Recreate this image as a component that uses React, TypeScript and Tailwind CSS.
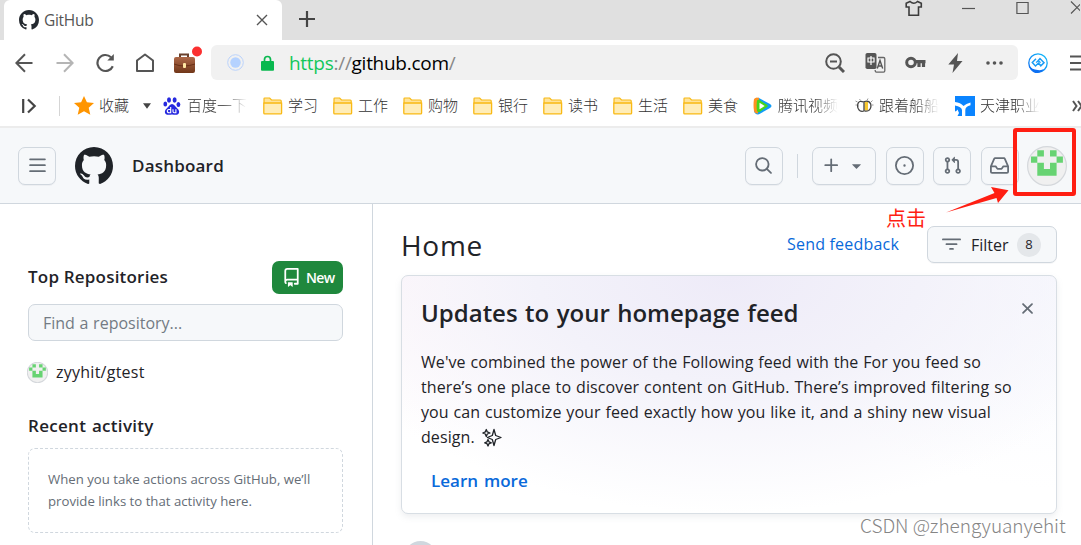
import type { ReactNode } from "react";

const PATHS = {
  mark: "M8 0c4.42 0 8 3.58 8 8a8.013 8.013 0 0 1-5.45 7.59c-.4.08-.55-.17-.55-.38 0-.27.01-1.13.01-2.2 0-.75-.25-1.23-.54-1.48 1.78-.2 3.65-.88 3.65-3.95 0-.88-.31-1.59-.82-2.15.08-.2.36-1.02-.08-2.12 0 0-.67-.22-2.2.82-.64-.18-1.32-.27-2-.27-.68 0-1.36.09-2 .27-1.53-1.03-2.2-.82-2.2-.82-.44 1.1-.16 1.92-.08 2.12-.51.56-.82 1.28-.82 2.15 0 3.06 1.86 3.75 3.64 3.95-.23.2-.44.55-.51 1.07-.46.21-1.61.55-2.33-.66-.15-.24-.6-.83-1.23-.82-.67.01-.27.38.01.53.34.19.73.9.82 1.13.16.45.68 1.31 2.69.94 0 .67.01 1.3.01 1.49 0 .21-.15.45-.55.38A7.995 7.995 0 0 1 0 8c0-4.42 3.58-8 8-8Z",
  bars: "M1 2.75A.75.75 0 0 1 1.75 2h12.5a.75.75 0 0 1 0 1.5H1.75A.75.75 0 0 1 1 2.75Zm0 5A.75.75 0 0 1 1.75 7h12.5a.75.75 0 0 1 0 1.5H1.75A.75.75 0 0 1 1 7.75ZM1.75 12h12.5a.75.75 0 0 1 0 1.5H1.75a.75.75 0 0 1 0-1.5Z",
  search: "M10.68 11.74a6 6 0 0 1-7.922-8.982 6 6 0 0 1 8.982 7.922l3.04 3.04a.749.749 0 0 1-.326 1.275.749.749 0 0 1-.734-.215ZM11.5 7a4.499 4.499 0 1 0-8.997 0A4.499 4.499 0 0 0 11.5 7Z",
  plus: "M7.75 2a.75.75 0 0 1 .75.75V7h4.25a.75.75 0 0 1 0 1.5H8.5v4.25a.75.75 0 0 1-1.5 0V8.5H2.75a.75.75 0 0 1 0-1.5H7V2.75A.75.75 0 0 1 7.75 2Z",
  caret: "m4.427 7.427 3.396 3.396a.25.25 0 0 0 .354 0l3.396-3.396A.25.25 0 0 0 11.396 7H4.604a.25.25 0 0 0-.177.427Z",
  issue: "M8 9a1 1 0 1 0 0-2 1 1 0 0 0 0 2ZM8 0a8 8 0 1 1 0 16A8 8 0 0 1 8 0ZM1.5 8a6.5 6.5 0 1 0 13 0 6.5 6.5 0 0 0-13 0Z",
  pull: "M1.5 3.25a2.25 2.25 0 1 1 3 2.122v5.256a2.251 2.251 0 1 1-1.5 0V5.372A2.25 2.25 0 0 1 1.5 3.25Zm5.677-.177L9.573.677A.25.25 0 0 1 10 .854V2.5h1A2.5 2.5 0 0 1 13.5 5v5.628a2.251 2.251 0 1 1-1.5 0V5a1 1 0 0 0-1-1h-1v1.646a.25.25 0 0 1-.427.177L7.177 3.427a.25.25 0 0 1 0-.354ZM3.75 2.5a.75.75 0 1 0 0 1.5.75.75 0 0 0 0-1.5Zm0 9.5a.75.75 0 1 0 0 1.5.75.75 0 0 0 0-1.5Zm8.25.75a.75.75 0 1 0 1.5 0 .75.75 0 0 0-1.5 0Z",
  inbox: "M2.8 2.06A1.75 1.75 0 0 1 4.41 1h7.18c.7 0 1.333.417 1.61 1.06l2.74 6.395c.04.093.06.194.06.295v4.5A1.75 1.75 0 0 1 14.25 15H1.75A1.75 1.75 0 0 1 0 13.25v-4.5c0-.101.02-.202.06-.295Zm1.61.44a.25.25 0 0 0-.23.152L1.887 8H4.75a.75.75 0 0 1 .6.3L6.625 10h2.75l1.275-1.7a.75.75 0 0 1 .6-.3h2.863L11.82 2.652a.25.25 0 0 0-.23-.152Zm10.09 7h-2.875l-1.275 1.7a.75.75 0 0 1-.6.3h-3.5a.75.75 0 0 1-.6-.3L4.375 9.5H1.5v3.75c0 .138.112.25.25.25h12.5a.25.25 0 0 0 .25-.25Z",
  repo: "M2 2.5A2.5 2.5 0 0 1 4.5 0h8.75a.75.75 0 0 1 .75.75v12.5a.75.75 0 0 1-.75.75h-2.5a.75.75 0 0 1 0-1.5h1.75v-2h-8a1 1 0 0 0-.714 1.7.75.75 0 1 1-1.072 1.05A2.495 2.495 0 0 1 2 11.5Zm10.5-1h-8a1 1 0 0 0-1 1v6.708A2.486 2.486 0 0 1 4.5 9h8ZM5 12.25a.25.25 0 0 1 .25-.25h3.5a.25.25 0 0 1 .25.25v3.25a.25.25 0 0 1-.4.2l-1.45-1.087a.249.249 0 0 0-.3 0L5.4 15.7a.25.25 0 0 1-.4-.2Z",
  x: "M3.72 3.72a.75.75 0 0 1 1.06 0L8 6.94l3.22-3.22a.749.749 0 0 1 1.275.326.749.749 0 0 1-.215.734L9.06 8l3.22 3.22a.749.749 0 0 1-.326 1.275.749.749 0 0 1-.734-.215L8 9.06l-3.22 3.22a.751.751 0 0 1-1.042-.018.751.751 0 0 1-.018-1.042L6.94 8 3.72 4.78a.75.75 0 0 1 0-1.06Z",
  filter: "M.75 3h14.5a.75.75 0 0 1 0 1.5H.75a.75.75 0 0 1 0-1.5ZM3 7.75A.75.75 0 0 1 3.75 7h8.5a.75.75 0 0 1 0 1.5h-8.5A.75.75 0 0 1 3 7.75Zm3 4a.75.75 0 0 1 .75-.75h2.5a.75.75 0 0 1 0 1.5h-2.5a.75.75 0 0 1-.75-.75Z",
};

function Octicon({ name, size = 19, className = "" }: { name: keyof typeof PATHS; size?: number; className?: string }) {
  return (
    <svg viewBox="0 0 16 16" width={size} height={size} fill="currentColor" className={`shrink-0 ${className}`}>
      <path d={PATHS[name]} />
    </svg>
  );
}

function Identicon({ size }: { size: number }) {
  return (
    <svg viewBox="0 0 40 40" width={size} height={size} className="shrink-0">
      <circle cx="20" cy="20" r="19.400" fill="#f0f0f0" stroke="#d5d8dc" strokeWidth={size > 30 ? 1.2 : 2} />
      <path
        fill="#67d372"
        d="M10.3 4.2h6.6v6.2h-6.6zM23 4.2h6.6v6.2H23zM4 10.4h6.3v6.3H4zM29.6 10.4h6.3v6.3h-6.3zM10.3 16.7h6.6V23H23v-6.3h6.6v13H10.3z"
      />
    </svg>
  );
}

function Folder() {
  return (
    <svg width="20" height="18" viewBox="0 0 20 18" className="shrink-0">
      <path d="M1 1.7Q1 1 1.7 1h5l1.8 2H17.300q.9 0 .9.9V6H1z" fill="#ffe39a" stroke="#f7b916" strokeWidth="1.2" />
      <path d="M.8 6.200h17.800V16q0 .9-.9.9H1.700q-.9 0-.9-.9z" fill="#ffedb8" stroke="#f9b914" strokeWidth="1.3" />
    </svg>
  );
}

function HeaderButton({ children, className = "w-[38px]" }: { children: ReactNode; className?: string }) {
  return (
    <button
      className={`flex h-[38px] shrink-0 items-center justify-center rounded-[7px] border border-[#d0d7de] bg-[#f6f8fa] text-[#656d76] shadow-[0_1px_0_rgba(31,35,40,0.04)] ${className}`}
    >
      {children}
    </button>
  );
}

function TabStrip() {
  return (
    <div className="flex h-10 bg-[#e0e0e0] pl-1">
      <div className="flex w-[278px] items-center rounded-t-md bg-white pl-[15px] pr-[14px]">
        <Octicon name="mark" size={20} className="text-[#24292f]" />
        <span className="ml-[5px] w-[60px] pt-0.5 text-[15.500px] tracking-[-0.3px] text-[#555]">GitHub</span>
        <svg width="12" height="12" viewBox="0 0 12 12" className="ml-auto" stroke="#555" strokeWidth="1.4">
          <path d="M1 1l10 10M11 1L1 11" />
        </svg>
      </div>
      <svg width="16" height="16" viewBox="0 0 16 16" className="ml-[17px] mt-[11px]" stroke="#444" strokeWidth="2.2">
        <path d="M8 0v16M0 8h16" />
      </svg>
      <svg width="18" height="17" viewBox="0 0 18 17" className="ml-[590px]" fill="none" stroke="#3c3c3c" strokeWidth="1.6">
        <path d="M5 1.500L1.200 3.200V7H4v8.200h9.500V7h2.800V3.200L12.500 1.500Q8.700 5 5 1.500z" />
      </svg>
      <svg width="13" height="17" viewBox="0 0 13 17" className="ml-[39px]" stroke="#555" strokeWidth="1.2">
        <path d="M0 8.500h13" />
      </svg>
      <svg width="13" height="17" viewBox="0 0 13 17" className="ml-[41px]" fill="none" stroke="#555" strokeWidth="1.2">
        <path d="M.9 2.500h11.200v11H.9z" />
      </svg>
      <svg width="10" height="17" viewBox="0 0 10 17" className="ml-[41px]" stroke="#555" strokeWidth="1.2">
        <path d="M1 1.500l12 12M1 13.500l12-12" />
      </svg>
    </div>
  );
}

function AddressBar() {
  return (
    <div className="flex h-[45px] items-center overflow-hidden bg-white pl-[15px] [&>svg]:shrink-0">
      <svg width="18" height="20" viewBox="0 0 18 20" fill="none" stroke="#555" strokeWidth="2">
        <path d="M17.500 10H1.500M10 1.300L1.400 10l8.600 8.700" />
      </svg>
      <svg width="18" height="20" viewBox="0 0 18 20" className="ml-[23px]" fill="none" stroke="#b5b5b5" strokeWidth="2">
        <path d="M.5 10h16M8 1.300l8.600 8.700L8 18.700" />
      </svg>
      <svg width="20" height="20" viewBox="0 0 20 20" className="ml-[22px]" fill="none" stroke="#555" strokeWidth="2.200">
        <path d="M16.800 13.200A8 8 0 1 1 15 4.200" />
        <path d="M17.800 1v6.500h-6.500z" fill="#555" stroke="none" />
      </svg>
      <svg width="20" height="20" viewBox="0 0 20 20" className="ml-[19px]" fill="none" stroke="#555" strokeWidth="2" strokeLinejoin="round">
        <path d="M2 7.500L10 1.500l8 6V18H2z" />
      </svg>
      <svg width="30" height="29" viewBox="0 0 30 29" className="mb-[5px] ml-[17px]">
        <defs>
          <linearGradient id="bag" x1="0" y1="0" x2="0" y2="1">
            <stop offset="0" stopColor="#ae6848" />
            <stop offset="1" stopColor="#713719" />
          </linearGradient>
        </defs>
        <path d="M8 13v-4.500h8V13" fill="none" stroke="#69402c" strokeWidth="2" />
        <rect x="2" y="11" width="21" height="16" rx="2" fill="url(#bag)" />
        <path d="M2 18q10 4 21 0" stroke="#693016" fill="none" />
        <rect x="11" y="17" width="3" height="5" rx="1" fill="#ffe6a2" />
        <circle cx="25" cy="5.500" r="5" fill="#fb3030" />
      </svg>
      <div className="ml-[9px] flex h-[35px] w-[807px] shrink-0 items-center rounded-md bg-[#f1f1f1] pl-4">
        <svg width="17" height="17" viewBox="0 0 17 17">
          <circle cx="8.500" cy="8.500" r="7.800" fill="none" stroke="#bad2fb" />
          <circle cx="8.500" cy="8.500" r="5.200" fill="#b5d2ff" />
        </svg>
        <svg width="13" height="16" viewBox="0 0 13 16" className="ml-[17px]">
          <path d="M3.500 7V4.500a3 3 0 0 1 6 0V7" fill="none" stroke="#09b84f" strokeWidth="1.700" />
          <rect y="6" width="13" height="9.700" rx="1" fill="#09b84f" />
        </svg>
        <span className="ml-[15px] w-[200px] whitespace-nowrap text-[19px] leading-[30px] tracking-[-0.28px] text-black">
          <span className="text-[#13c75a]">https</span>
          <span className="text-[#888]">://</span>github.com<span className="text-[#888]">/</span>
        </span>
        <svg width="20" height="20" viewBox="0 0 20 20" className="ml-[336px]" fill="none" stroke="#555" strokeWidth="2">
          <circle cx="8.500" cy="8.500" r="7.300" />
          <path d="M5 8.500h7" />
          <path d="M14 14l5 5" strokeWidth="3" />
        </svg>
        <svg width="21" height="20" viewBox="0 0 21 20" className="ml-5">
          <rect x=".5" width="11" height="16" rx="1.800" fill="#555" />
          <path d="M3 5h6v4H3zM6 3v9" fill="none" stroke="#fff" strokeWidth="1.200" />
          <path d="M13 4.500h5.500q1.300 0 1.300 1.300v12q0 1.300-1.300 1.300h-7q-1.300 0-1.300-1.300V17" fill="none" stroke="#666" strokeWidth="1.300" />
          <path d="M12.300 15.500l2.700-8 2.700 8M13.200 13h3.700" fill="none" stroke="#555" strokeWidth="1.400" />
        </svg>
        <svg width="21" height="13" viewBox="0 0 21 13" className="ml-[19px]" fill="none" stroke="#555">
          <circle cx="6" cy="6.500" r="4.300" strokeWidth="3" />
          <path d="M10 5.700h10.500M14 6v5M18.500 6v5" strokeWidth="3.200" />
        </svg>
        <svg width="15" height="20" viewBox="0 0 15 20" className="ml-[22px]">
          <path d="M10 0L.3 11.500H6L4.500 20 14.500 8H9z" fill="#555" />
        </svg>
        <svg width="17" height="4" viewBox="0 0 17 4" className="ml-[23px]" fill="#555">
          <circle cx="2" cy="2" r="1.800" />
          <circle cx="8.500" cy="2" r="1.800" />
          <circle cx="15" cy="2" r="1.800" />
        </svg>
      </div>
      <svg width="20" height="20" viewBox="0 0 20 20" className="ml-[10px]" fill="none">
        <defs>
          <linearGradient id="ring" x1="1" y1="0" x2="0" y2="1">
            <stop offset="0" stopColor="#16c1fb" />
            <stop offset="1" stopColor="#0b69ef" />
          </linearGradient>
        </defs>
        <circle cx="10" cy="10" r="9.200" stroke="url(#ring)" strokeWidth="1.300" />
        <path d="M.8 12.500q3 4 9 4.500 4 .5 6-1-2 4.500-8.500 4Q2.500 18.500.8 12.500z" fill="#0e70f2" />
        <path d="M8 5.800L4.300 9.500 7.500 13l3-3 2.300 2.800L16 9.700 12 5.500 9.800 8" stroke="#1b9cf5" strokeWidth="1.500" />
        <path d="M8 9.500l2.500-1.700 2 2" stroke="#1b9cf5" strokeWidth="1.300" />
      </svg>
      <svg width="14" height="18" viewBox="0 0 14 18" className="ml-[22px]" stroke="#555" strokeWidth="2.200">
        <path d="M0 2.500h14M0 9h14M0 15.500h14" />
      </svg>
    </div>
  );
}

const folders = ["学习", "工作", "购物", "银行", "读书", "生活", "美食"];
const fade = "w-[60px] shrink-0 overflow-hidden whitespace-nowrap [mask-image:linear-gradient(to_right,#000_60%,transparent)]";

function BookmarksBar() {
  return (
    <div className="flex h-[43px] items-center overflow-hidden border-b-2 border-[#ececec] bg-white pl-[22px] text-[15px] font-light text-[#333]">
      <svg width="15" height="16" viewBox="0 0 15 16" className="shrink-0" fill="none" stroke="#444" strokeWidth="2.200">
        <path d="M1.200 1v14M6 1.500L12.700 8 6 14.500" />
      </svg>
      <div className="ml-[22px] h-5 w-px shrink-0 bg-[#d5d5d5]" />
      <svg width="20" height="19" viewBox="0 0 20 19" className="ml-[14px] shrink-0">
        <path d="M10 0l2.900 6.300 7.100.7-5.300 4.700 1.600 7L10 15.200 3.700 18.700l1.600-7L0 7l7.100-.7z" fill="#ff9500" />
      </svg>
      <span className="ml-[5px] w-[30px] shrink-0">收藏</span>
      <svg width="8" height="6" viewBox="0 0 8 6" className="ml-[14px] shrink-0">
        <path d="M0 .3h8L4 5.700z" fill="#444" />
      </svg>
      <svg width="18" height="18" viewBox="0 0 18 18" className="ml-[12px] shrink-0" fill="#2629df">
        <ellipse cx="6" cy="3" rx="2" ry="2.700" />
        <ellipse cx="11.600" cy="3" rx="2" ry="2.700" />
        <ellipse cx="2.300" cy="7" rx="1.900" ry="2.500" />
        <ellipse cx="15.400" cy="7.500" rx="1.900" ry="2.500" />
        <path d="M9 7q2 0 3.500 2.500l3 3.200q1.500 3-.5 4.500-1.500 1-6 .3-4.500.7-6-.3-2-1.500-.5-4.500l3-3.200Q7 7 9 7z" />
        <path d="M7.700 10v5.800H6q-1.700 0-1.700-1.700T6 12.500h1.700M10 12.300v2.300q0 1.200 1.200 1.200h1.700v-3.500" fill="none" stroke="#fff" strokeWidth="1.100" />
      </svg>
      <span className={`ml-[6px] ${fade}`}>百度一下</span>
      <div className="ml-[16px] flex gap-[14px]">
        {folders.map((name) => (
          <div key={name} className="flex w-[56px] items-center gap-[5px] whitespace-nowrap">
            <Folder />
            {name}
          </div>
        ))}
      </div>
      <svg width="19" height="18" viewBox="0 0 19 18" className="ml-[14px] shrink-0">
        <path d="M5 .5L17 7q3 2 0 4L6 17.300Q2 18 1 14z" fill="#109df7" />
        <path d="M1 2q2-2.500 5-1L5 16.500q-3 .5-4-2.500-1-6 0-12z" fill="#ff9020" />
        <path d="M4 3.500q1-1.200 2.500-.4l7.500 4.700q1.500 1.200 0 2.300L6.500 15q-1.800.6-2.500-1-.8-5 0-10.500z" fill="#45d51b" />
        <path d="M6.500 5.700l5.200 3.300-5.200 3.200z" fill="#fff" />
      </svg>
      <span className={`ml-[6px] ${fade}`}>腾讯视频</span>
      <svg width="19" height="18" viewBox="0 0 19 18" className="ml-[17px] shrink-0" fill="none" stroke="#444">
        <path d="M9.500 4.500h3.500v9H9.500z" fill="#f8c830" stroke="none" />
        <path d="M8.500 5Q4 3 2.800 7q-.8 4 1.700 6.500 2 1.300 4.500.5" strokeWidth="1.300" />
        <path d="M9 4v10M9.500 4.500Q14 3 15.700 7q1 4-2 6.500-2 1-4.200.5" strokeWidth="1.300" />
        <path d="M.5 4l2 1M.5 8h1.500M4.500 2l1 1.500M17.500 3.500L16 5M18.500 8h-1.500M13 1.500l-.8 1.500" stroke="#999" />
      </svg>
      <span className={`ml-[5px] ${fade}`}>跟着船船</span>
      <svg width="20" height="20" viewBox="0 0 20 20" className="ml-[16px] shrink-0">
        <path d="M0 0h20v20H0z" fill="#0a84ff" />
        <path d="M0 6q5.500.5 8.500 4Q11 7.500 15.500 6.500v2.800Q10.500 10.500 10.300 14v6H7v-6Q6.500 10.500 0 9.500z" fill="#fff" />
        <path d="M0 15.500q1.500 0 2.500-2L4 17l-1.500 3H0z" fill="#fff" />
      </svg>
      <span className={`ml-[5px] ${fade}`}>天津职业</span>
      <svg width="14" height="12" viewBox="0 0 14 12" className="ml-[32px] shrink-0" fill="none" stroke="#555" strokeWidth="2">
        <path d="M1 1l3.500 5L1 11M6 1l3.500 5L6 11" />
      </svg>
    </div>
  );
}

function GithubHeader() {
  return (
    <header className="relative flex h-[76px] items-center border-b border-[#d0d7de] bg-[#f6f8fa] pl-[18px]">
      <HeaderButton>
        <Octicon name="bars" />
      </HeaderButton>
      <Octicon name="mark" size={38} className="ml-[19px] text-[#1f2328]" />
      <span className="ml-[19px] w-[120px] text-[17px] font-semibold tracking-[0.2px] text-[#1f2328]">Dashboard</span>
      <div className="ml-auto flex shrink-0 items-center pr-[14px]">
        <HeaderButton className="w-[38px] pr-px">
          <Octicon name="search" />
        </HeaderButton>
        <div className="mx-[14px] h-6 w-px bg-[#d0d7de]" />
        <HeaderButton className="w-16 gap-[6px]">
          <Octicon name="plus" />
          <Octicon name="caret" />
        </HeaderButton>
        <HeaderButton className="ml-[10px] w-[38px] pr-px">
          <Octicon name="issue" />
        </HeaderButton>
        <HeaderButton className="ml-[9px] w-[38px]">
          <Octicon name="pull" />
        </HeaderButton>
        <HeaderButton className="ml-[10px] w-[38px] pr-px">
          <Octicon name="inbox" />
        </HeaderButton>
        <div className="ml-2">
          <Identicon size={40} />
        </div>
      </div>

      {/* Annotation over the avatar */}
      <div className="absolute left-[1013px] top-0 h-[68px] w-[63px] rounded-[3px] border-4 border-[#ff1e12]" />
      <svg width="66" height="30" viewBox="0 0 66 30" className="absolute left-[944px] top-[57px] z-10">
        <path d="M2 27.500L50.500 8 47 2l17.500 3.200L54 18l-1.500-5z" fill="#ff1e12" />
      </svg>
      <span className="absolute left-[886px] top-[76px] z-10 whitespace-nowrap text-[20px] leading-[30px] text-[#ff1e12]">点击</span>
    </header>
  );
}

function Sidebar() {
  return (
    <aside className="w-[373px] shrink-0 border-r border-[#d0d7de] pl-7 pr-[29px] pt-[57px] text-[#1f2328]">
      <div className="flex h-[33px] items-center justify-between">
        <h2 className="mb-0.5 whitespace-nowrap text-[17px] font-semibold leading-6 tracking-[0.2px]">Top Repositories</h2>
        <button className="flex h-[33px] w-[71px] items-center rounded-[7px] bg-[#1f883d] pl-[10px] text-[14px] font-semibold text-white">
          <Octicon name="repo" />
          <span className="ml-[5px] tracking-[-0.6px]">New</span>
        </button>
      </div>
      <div className="mt-[10px] flex h-[37px] items-center rounded-[7px] border border-[#d0d7de] bg-[#f6f8fa] pl-[14px] text-[16px] text-[#737b84] [word-spacing:0.5px]">
        Find a repository...
      </div>
      <div className="-ml-px mt-[21px] flex h-[21px] items-center">
        <Identicon size={21} />
        <span className="mb-0.5 ml-2 whitespace-nowrap text-[16px] tracking-[0.25px]">zyyhit/gtest</span>
      </div>
      <h2 className="mt-[31px] h-6 whitespace-nowrap text-[17px] font-semibold leading-6 tracking-[0.3px] [word-spacing:1px]">Recent activity</h2>
      <div className="mt-[10px] h-[85px] whitespace-nowrap rounded-[7px] border border-dashed border-[#d0d7de] pl-[19px] pt-[19px] text-[13.200px] leading-[22px] text-[#656d76]">
        <p>When you take actions across GitHub, we’ll</p>
        <p>provide links to that activity here.</p>
      </div>
    </aside>
  );
}

function Feed() {
  return (
    <main className="min-w-0 flex-1 pl-[28px] pr-6 pt-[22px] text-[#1f2328]">
      <div className="flex h-[37px] items-center">
        <h1 className="whitespace-nowrap text-[28px] font-medium tracking-[0.7px]">Home</h1>
        <a className="mb-0.5 ml-auto whitespace-nowrap text-[16px] tracking-[0.2px] text-[#0969da]">Send feedback</a>
        <button className="ml-[28px] flex h-[37px] w-[130px] items-center rounded-[7px] border border-[#d0d7de] bg-[#f6f8fa] pl-[14px] text-[16px] shadow-[0_1px_0_rgba(31,35,40,0.04)]">
          <Octicon name="filter" className="text-[#656d76]" />
          <span className="ml-[10px] w-[37px]">Filter</span>
          <span className="ml-[9px] flex h-6 w-6 items-center justify-center rounded-full bg-[#e4e7ea] text-[13px]">8</span>
        </button>
      </div>
      <section className="relative mt-[12px] h-[239px] rounded-[7px] border border-[#d8dee4] bg-white bg-[radial-gradient(ellipse_65%_100%_at_50%_0%,#eeebf8_0%,#f3f2fa_45%,rgba(255,255,255,0)_100%),radial-gradient(ellipse_45%_70%_at_0%_0%,#fff8fb_0%,rgba(255,255,255,0)_100%),radial-gradient(ellipse_45%_90%_at_100%_0%,#f8f9fe_0%,rgba(255,255,255,0)_100%)] pl-[19px] shadow-[0_3px_6px_rgba(140,149,159,0.15)]">
        <h3 className="mt-5 whitespace-nowrap text-[24px] font-semibold leading-[34px] [word-spacing:1.2px]">
          Updates to your homepage feed
        </h3>
        <div className="mt-5 whitespace-nowrap text-[16px] leading-[25px] tracking-[0.08px] [word-spacing:0.6px]">
          <p>We've combined the power of the Following feed with the For you feed so</p>
          <p className="tracking-[0.12px]">there’s one place to discover content on GitHub. There’s improved filtering so</p>
          <p>you can customize your feed exactly how you like it, and a shiny new visual</p>
          <p className="flex items-center">
            design.
            <svg width="20" height="19" viewBox="0 0 20 19" className="ml-[7px]" fill="none" stroke="#1f2328" strokeWidth="1.300" strokeLinejoin="round">
              <path d="M12 1.500l1.700 6 5.300 2-5.300 2L12 17.500l-1.700-6-5-2 5-2z" />
              <path d="M4.300 1.500l1 2.400L8 5 5.300 6l-1 2.400-1-2.400L.8 5l2.500-1.100zM6 11.500l1 2.300 2.300 1L7 15.700 6 18l-1-2.300-2.300-.9 2.300-1z" />
            </svg>
          </p>
        </div>
        <a className="ml-[10px] mt-[18px] block whitespace-nowrap text-[17px] font-semibold leading-[26px] text-[#0969da] [word-spacing:1.5px]">Learn more</a>
        <Octicon name="x" className="absolute right-[19px] top-[23px] text-[#656d76]" />
      </section>
      <div className="ml-[3px] mt-[27px] h-[33px] w-[33px] rounded-full bg-[#d0d7de]" />
    </main>
  );
}

export default function App() {
  return (
    <div className="relative flex h-[545px] w-[1081px] flex-col overflow-hidden bg-white font-['Open_Sans','Noto_Sans_CJK_SC',sans-serif]">
      <TabStrip />
      <AddressBar />
      <BookmarksBar />
      <GithubHeader />
      <div className="flex min-h-0 flex-1">
        <Sidebar />
        <Feed />
      </div>
      <span className="absolute left-[860px] top-[511px] whitespace-nowrap font-['Noto_Sans_CJK_SC',sans-serif] text-[19px] font-light leading-[28px] tracking-[-0.05px] text-[#858585] [text-shadow:1px_1px_1px_#fff]">
        CSDN @zhengyuanyehit
      </span>
    </div>
  );
}
